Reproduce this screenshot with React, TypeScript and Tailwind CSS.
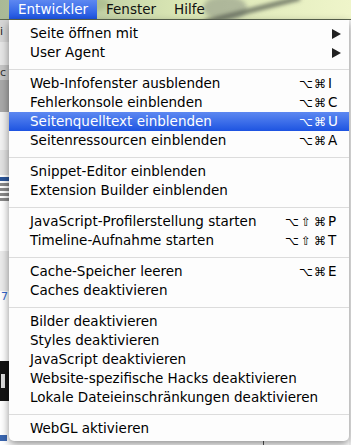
import React from 'react';

type Item =
    | { kind: 'sep' }
    | { kind: 'item'; label: string; mods?: string[]; key?: string; submenu?: boolean; active?: boolean };

const ITEMS: Item[] = [
    { kind: 'item', label: 'Seite öffnen mit', submenu: true },
    { kind: 'item', label: 'User Agent', submenu: true },
    { kind: 'sep' },
    { kind: 'item', label: 'Web-Infofenster ausblenden', mods: ['⌥', '⌘'], key: 'I' },
    { kind: 'item', label: 'Fehlerkonsole einblenden', mods: ['⌥', '⌘'], key: 'C' },
    { kind: 'item', label: 'Seitenquelltext einblenden', mods: ['⌥', '⌘'], key: 'U', active: true },
    { kind: 'item', label: 'Seitenressourcen einblenden', mods: ['⌥', '⌘'], key: 'A' },
    { kind: 'sep' },
    { kind: 'item', label: 'Snippet-Editor einblenden' },
    { kind: 'item', label: 'Extension Builder einblenden' },
    { kind: 'sep' },
    { kind: 'item', label: 'JavaScript-Profilerstellung starten', mods: ['⌥', '⇧', '⌘'], key: 'P' },
    { kind: 'item', label: 'Timeline-Aufnahme starten', mods: ['⌥', '⇧', '⌘'], key: 'T' },
    { kind: 'sep' },
    { kind: 'item', label: 'Cache-Speicher leeren', mods: ['⌥', '⌘'], key: 'E' },
    { kind: 'item', label: 'Caches deaktivieren' },
    { kind: 'sep' },
    { kind: 'item', label: 'Bilder deaktivieren' },
    { kind: 'item', label: 'Styles deaktivieren' },
    { kind: 'item', label: 'JavaScript deaktivieren' },
    { kind: 'item', label: 'Website-spezifische Hacks deaktivieren' },
    { kind: 'item', label: 'Lokale Dateieinschränkungen deaktivieren' },
    { kind: 'sep' },
    { kind: 'item', label: 'WebGL aktivieren' },
];

// bits of the browser window peeking out left of the menu
const LeftStrip = () => (
    <div className="w-[9px] flex flex-col overflow-hidden text-[11px] leading-none">
        <div className="h-[22px] bg-[#d6d6d6] text-[#222] flex items-center">i</div>
        <div className="h-[23px] bg-[#e6e6e6]" />
        <div className="h-[15px] bg-[#c6c6c6] text-[#333] flex items-center">c</div>
        <div className="h-[32px] bg-[#a9a9a9]" />
        <div className="h-[38px] bg-[#f2f2f2]" />
        <div className="h-[25px] bg-[#e2e2e2]" />
        <div className="h-[36px] bg-white flex flex-col gap-[2px] pt-[2px]">
            <div className="h-[4px] bg-[#2a5599]" />
            <div className="h-[3px] bg-[#888]" />
            <div className="h-[3px] bg-[#888]" />
            <div className="h-[3px] bg-[#888]" />
            <div className="h-[3px] bg-[#888]" />
        </div>
        <div className="h-[40px] bg-white" />
        <div className="h-[40px] bg-[#ebebeb]" />
        <div className="h-[12px] bg-white text-[#3366cc] pl-[1px]">7</div>
        <div className="h-[58px] bg-white" />
        <div className="h-[40px] bg-[#141414] flex items-center pl-[1px]">
            <div className="w-[4px] h-[14px] bg-[#ddd]" />
        </div>
        <div className="flex-1 bg-white flex items-end pb-[4px]">
            <div className="w-[7px] h-[6px] bg-[#3a66b0]" />
        </div>
    </div>
);

const MenuRow = ({ item }: { item: Extract<Item, { kind: 'item' }> }) => (
    <div
        className={`h-[19px] flex items-center ${
            item.active ? 'bg-gradient-to-b from-[#5d88f1] to-[#1d53e1] text-white' : 'text-black'
        }`}
    >
        <span className="flex-1 pl-[21px] whitespace-nowrap">{item.label}</span>
        {item.mods && (
            <>
                {item.mods.map((m) => (
                    <span key={m} className="w-[14px] text-center text-[12px]">{m}</span>
                ))}
                <span className="w-[22px] pl-[1px]">{item.key}</span>
            </>
        )}
        {item.submenu && (
            <svg width="9" height="10" viewBox="0 0 9 10" className="mr-[8px]">
                <path d="M0 0 L9 5 L0 10 Z" fill="#222" />
            </svg>
        )}
    </div>
);

export default function App() {
    return (
        <div
            className="w-[351px] h-[445px] overflow-hidden flex flex-col bg-white"
            style={{ fontFamily: '"DejaVu Sans", sans-serif' }}
        >
            {/* menu bar over the desktop picture */}
            <div className="relative h-[20px] flex items-stretch text-[13.5px] bg-gradient-to-r from-[#a9b996] via-[#d8e5b3] to-[#eff5ca] border-b border-[#5b6650]">
                <svg className="absolute inset-0" width="351" height="20" viewBox="0 0 351 20">
                    <defs>
                        <filter id="blur" x="-20%" y="-50%" width="140%" height="200%">
                            <feGaussianBlur stdDeviation="2.2" />
                        </filter>
                    </defs>
                    <ellipse cx="70" cy="4" rx="40" ry="10" fill="#9aab7c" opacity="0.45" filter="url(#blur)" />
                    <ellipse cx="225" cy="8" rx="22" ry="12" fill="#80877d" opacity="0.5" filter="url(#blur)" />
                    <path d="M205 22 L300 -2" stroke="#5f6658" strokeWidth="4" filter="url(#blur)" />
                </svg>
                <div className="relative w-[9px]" />
                <div className="relative w-[88px] flex items-center pl-[9px] text-white bg-gradient-to-b from-[#5d88f1] to-[#1d53e1]">
                    Entwickler
                </div>
                <div className="relative flex items-center pl-[9px] text-[#111]">Fenster</div>
                <div className="relative flex items-center pl-[18px] text-[#111]">Hilfe</div>
            </div>

            <div className="flex flex-1">
                <LeftStrip />
                <div className="w-[340px] flex flex-col">
                    <div className="h-[421px] bg-[#fdfdfd] rounded-b-[5px] shadow-[0_3px_8px_rgba(0,0,0,0.45)] pt-[4px] text-[13.5px] relative z-10">
                        {ITEMS.map((item, i) =>
                            item.kind === 'sep' ? (
                                <div key={i} className="h-[12px] pt-[7px]">
                                    <div className="h-px bg-[#dcdcdc]" />
                                </div>
                            ) : (
                                <MenuRow key={i} item={item} />
                            )
                        )}
                    </div>
                    <div className="flex-1 bg-white flex">
                        <div className="w-[254px]" />
                        <div className="w-px bg-[#555]" />
                    </div>
                </div>
                <div className="flex-1 bg-[#f4f4f4]" />
            </div>
        </div>
    );
}
